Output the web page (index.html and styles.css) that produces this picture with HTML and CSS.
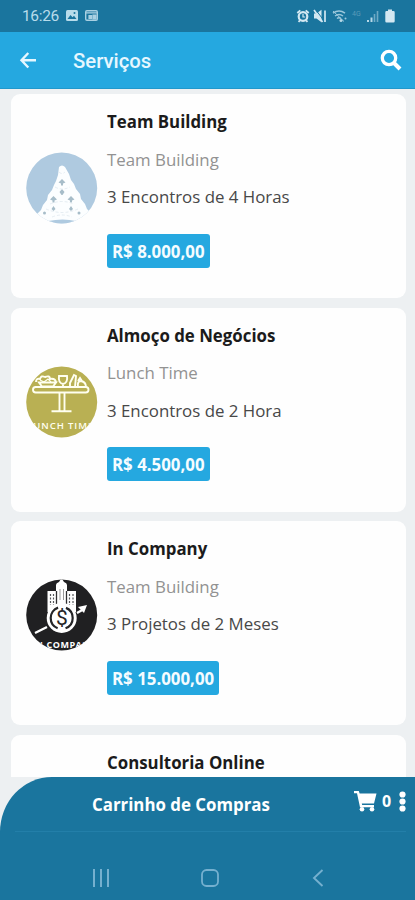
FILE: index.html
```html
<!DOCTYPE html>
<html lang="pt-BR">
<head>
<meta charset="utf-8">
<title>Serviços</title>
<link rel="stylesheet" href="styles.css">
</head>
<body>
<div class="screen">
  <div class="status">
    <span class="clock">16:26</span>
    <svg class="status-left" width="34" height="14" viewBox="0 0 34 14">
      <rect x="1" y="1" width="12" height="11" rx="1.5" fill="#b8dceb"/>
      <path d="M2.5 10l3-4 2 2.300 1.500-1.500 2.500 3.200z" fill="#1a759e"/>
      <circle cx="9.500" cy="4" r="1" fill="#1a759e"/>
      <rect x="20.700" y="1.700" width="11.600" height="9.600" rx="1.200" fill="none" stroke="#a9d0e2" stroke-width="1.400"/>
      <path d="M20.500 3.800h12M24 6.500h2.500v3H24zM28 6h3v4h-3z" stroke="#a9d0e2" stroke-width="1.200" fill="#a9d0e2"/>
    </svg>
    <svg class="status-right" width="102" height="18" viewBox="296 7 102 18">
      <g fill="none" stroke="#d3e8f2" stroke-width="2.200">
        <circle cx="303" cy="16.500" r="4.300"/>
        <path d="M297.300 13l3-2.600M308.700 13l-3-2.600M298.500 21.800l1.500-1.500M307.500 21.800l-1.500-1.500" stroke-width="1.900"/>
        <path d="M303 14v3h2.200" stroke-width="1.200"/>
      </g>
      <path d="M314 13.500h2.500l5-3.800v12.600l-5-3.800H314z" fill="#d3e8f2"/>
      <path d="M315.500 9.500l8 10.500" stroke="#1a759e" stroke-width="1"/>
      <path d="M314 10l8.500 12M325 10.500v11.500" stroke="#d3e8f2" stroke-width="1.700"/>
      <g fill="none" stroke="#9cc8dc" stroke-width="1.500">
        <path d="M333 13.200q6-4.500 12 0M335 16q4-3 8 0M337 18.500q2-1.500 4 0"/>
        <path d="M333 11l11 10.500" stroke-width="1"/>
      </g>
      <circle cx="341" cy="20.500" r="1.500" fill="#b6d8e7"/><circle cx="345.500" cy="18.500" r="1" fill="#9cc8dc"/>
      <text x="352" y="15.500" class="network">4G</text>
      <path d="M368 20v2M371.500 17.500V22" stroke="#b6d8e7" stroke-width="2"/>
      <path d="M374.500 14v8M377.500 11v11" stroke="#6faac5" stroke-width="1.600"/>
      <path d="M388 9.500h4V11h1.500q1.200 0 1.200 1.200v9q0 1.200-1.200 1.200h-7q-1.200 0-1.200-1.200v-9q0-1.200 1.200-1.200H388z" fill="#d3e8f2"/>
    </svg>
  </div>
  <header class="appbar">
    <svg width="18" height="18" viewBox="0 0 18 18" fill="none" stroke="#e6f7ff" stroke-width="2.400"><path d="M9.300 2L2.500 9.200l6.800 7.300M2.500 9.200H17"/></svg>
    <h1>Serviços</h1>
    <svg class="search" width="22" height="22" viewBox="0 0 22 22" fill="none" stroke="#fff"><circle cx="9" cy="9" r="6.700" stroke-width="3.300"/><path d="M14 14l6 6" stroke-width="4"/></svg>
  </header>
  <main class="list">
    <article class="card">
      <svg class="thumb" viewBox="0 0 72 72">
        <defs><clipPath id="round"><circle cx="35.700" cy="36" r="35.500"/></clipPath></defs>
        <g clip-path="url(#round)">
          <rect width="72" height="72" fill="#afcae0"/>
          <path d="M33 15q3-3 6 0l4 7 2 6 3 4 2 5 4 5 1 5 4 5 2 5 4 4-5 4-5 4-5 0-6 3H27l-6-3-5 0-6-6 5-5 2-5 4-5 1-5 4-5 2-5 2-4 2-6z" fill="#fcfeff"/>
          <path d="M22 69q15-3 28 0v3H22z" fill="#afcae0"/>
          <g fill="#a7bdc9">
            <path d="M36 27l3.500 3.500-2.500 1v2h-2v-2l-2.500-1z"/><path d="M36 37l2.500 3-2 3h-1l-2-3z"/>
            <path d="M27.500 44l3.500 3.500-2.500 1v2h-2v-2l-2.500-1zM45 44l3.500 3.500-2.500 1v2h-2v-2l-2.500-1z"/>
            <path d="M27.500 54l2 3-2 2-2-2zM45 54l2 3-2 2-2-2z"/>
            <circle cx="18.500" cy="61" r="1.500"/><circle cx="53" cy="61" r="1.500"/>
          </g>
          <path d="M33 20q3 3 6 0M29 35q7 4 15 0M24 52q12-5 24 0M20 57q16 7 32 0M26 65q10-4 20 0" fill="none" stroke="#dfe9ef" stroke-width=".8" stroke-dasharray="3 2"/>
        </g>
      </svg>
      <div class="info">
        <h2>Team Building</h2>
        <p class="kind">Team Building</p>
        <p class="desc">3 Encontros de 4 Horas</p>
        <span class="price">R$ 8.000,00</span>
      </div>
    </article>
    <article class="card">
      <svg class="thumb" viewBox="0 0 72 72">
        <g clip-path="url(#round)">
          <rect width="72" height="72" fill="#b9b053"/>
          <g fill="none" stroke="#fffff0" stroke-width="1.900">
            <rect x="7" y="21" width="55.500" height="5.500" rx="2.700"/>
            <path d="M33.500 27v18M38.500 27v18M25.500 45.300h20"/>
            <path d="M13 16.500h17l-3 4H16zM10 16q0-4 4-3 1-4 5-2 5-2 5 2 5-1 6 3"/>
            <path d="M14 14l4 2 4-3 3 3" stroke-width="1.200"/>
            <path d="M33 10h8q1 7-4 8-5-1-4-8zM37 18v4M44 21V17l4-8 2 1-1 11M52 21q-1-6 3-6 5 1 5 6M52 15l2-3 2 3"/>
          </g>
          <text y="62.800" class="thumb-text lunch"><tspan x="1">LUNCH</tspan> <tspan x="42">TIME</tspan></text>
        </g>
      </svg>
      <div class="info">
        <h2>Almoço de Negócios</h2>
        <p class="kind">Lunch Time</p>
        <p class="desc">3 Encontros de 2 Hora</p>
        <span class="price">R$ 4.500,00</span>
      </div>
    </article>
    <article class="card">
      <svg class="thumb" viewBox="0 0 72 72">
        <g clip-path="url(#round)">
          <rect width="72" height="72" fill="#202022"/>
          <path d="M21.500 33V12H30V6q0-2 3-3l2.500-4 2.500 4q3 1 3 3v6h9v21z" fill="#fff"/>
          <path d="M30.500 12v14M40.500 12v14" stroke="#303032" stroke-width="1.300"/>
          <path d="M24.500 15v11M27.500 15v11M43.500 15v11M47 15v11" stroke="#55575a" stroke-width="1.200" stroke-dasharray="2 1.500"/>
          <path d="M34 10v11M37.500 10v11" stroke="#999" stroke-width="1"/>
          <circle cx="35.700" cy="39" r="15" fill="#fff"/>
          <circle cx="35.700" cy="39" r="11" fill="none" stroke="#252527" stroke-width="2.200" stroke-dasharray="26.500 8.060" stroke-dashoffset="13.250"/>
          <text x="30" y="46" class="dollar">$</text>
          <path d="M9 54l12-6M51 34l7-4" stroke="#fff" stroke-width="2.400"/>
          <path d="M52 28l9-2-3 8z" fill="#fff"/>
          <text y="69" class="thumb-text company"><tspan x="6">IN</tspan> <tspan x="20.500">COMPANY</tspan></text>
        </g>
      </svg>
      <div class="info">
        <h2>In Company</h2>
        <p class="kind">Team Building</p>
        <p class="desc">3 Projetos de 2 Meses</p>
        <span class="price">R$ 15.000,00</span>
      </div>
    </article>
    <article class="card">
      <div class="thumb"></div>
      <div class="info"><h2>Consultoria Online</h2></div>
    </article>
  </main>
  <footer class="bottom">
    <div class="cart">
      <strong>Carrinho de Compras</strong>
      <svg class="cart-icon" width="23" height="21" viewBox="0 0 23 21" fill="#fff"><path d="M0 0h4.800l.8 2.500H22.500L20 12.500H7.800l.4 1.500H20v2.200H6L3 2.300H0z"/><circle cx="8" cy="18.300" r="2.300"/><circle cx="18" cy="18.300" r="2.300"/></svg>
      <span class="count">0</span>
      <svg class="more" width="7" height="21" viewBox="0 0 7 21" fill="#fff"><circle cx="3.500" cy="3.500" r="3.100"/><circle cx="3.500" cy="10.500" r="3.100"/><circle cx="3.500" cy="17.500" r="3.100"/></svg>
    </div>
    <nav class="nav">
      <svg width="18" height="18" viewBox="0 0 18 18" stroke="#75b0cf" stroke-width="2"><path d="M2 0v18M9 0v18M16 0v18"/></svg>
      <svg width="18" height="18" viewBox="0 0 18 18" fill="none" stroke="#75b0cf" stroke-width="1.800"><rect x="1" y="1" width="16" height="16" rx="4.500"/></svg>
      <svg width="18" height="18" viewBox="0 0 18 18" fill="none" stroke="#75b0cf" stroke-width="1.900"><path d="M13.500 1L5 9l8.500 8"/></svg>
    </nav>
  </footer>
</div>
</body>
</html>
```

FILE: styles.css
```css
* { box-sizing: border-box; }
body { margin: 0; font-family: "Open Sans", sans-serif; background: #edf0f2; }
h1, h2, p { margin: 0; }
svg { display: block; flex: none; }
.screen { width: 415px; height: 900px; display: flex; flex-direction: column; overflow: hidden; }
.status { height: 32px; flex: none; background: #1a759e; display: flex; align-items: center; padding: 0 17px 0 22px; }
.clock { font: 15.5px/32px Roboto, sans-serif; color: #b8dceb; width: 43px; white-space: nowrap; letter-spacing: -.35px; }
.status-right { margin-left: auto; }
.network { font: 7px Roboto, sans-serif; fill: #5b9bb9; }
.appbar { height: 57px; flex: none; background: #25a8e0; border-bottom: 1px solid #2198cc; display: flex; align-items: center; padding: 0 13px 0 19px; }
.appbar h1 { margin-left: 36px; font: 500 20.3px/58px Roboto, sans-serif; color: #e6f7ff; padding-top: 2px; }
.search { margin-left: auto; }
.list { flex: 1; min-height: 0; display: flex; flex-direction: column; gap: 9.5px; padding: 5px 9px 0 11px; overflow: hidden; }
.card { height: 204px; flex: none; background: #fefefe; border-radius: 9px; display: flex; padding: 9px 15px 0; }
.thumb { width: 72px; height: 72px; flex: none; margin: 49px 9px 0 0; }
.info { font-size: 16.85px; line-height: 37.5px; white-space: nowrap; }
.info h2 { font-size: 16.85px; line-height: 37.5px; font-weight: 700; color: #1b1b1b; }
.kind { color: #929292; }
.desc { color: #484848; }
.price { display: block; width: fit-content; margin-top: 18px; padding: 0 5px; height: 34px; line-height: 35px; border-radius: 3px; background: #25a8e0; color: #f5fcff; font-weight: 700; font-size: 16.85px; }
.thumb-text { font: 700 9.5px "Open Sans", sans-serif; letter-spacing: 1px; fill: #fff; }
.lunch { font-weight: 600; fill: #fffff0; }
.company { font-size: 9px; letter-spacing: .5px; }
.dollar { font: 21px Roboto, sans-serif; fill: #252527; }
.bottom { height: 123px; flex: none; background: #1a759e; border-top-left-radius: 52px 55px; }
.cart { height: 55px; margin: 0 9px 0 15px; border-bottom: 1px solid #237fa9; display: flex; align-items: center; color: #fff; }
.cart strong { margin-left: 77px; font-size: 16.85px; }
.cart-icon { margin: -6px 0 0 auto; }
.count { margin: -6px 7px 0 5px; width: 10px; font-size: 16px; font-weight: 700; }
.more { margin-top: -6px; }
.nav { padding: 37px 88px 0 92px; display: flex; justify-content: space-between; }
```
